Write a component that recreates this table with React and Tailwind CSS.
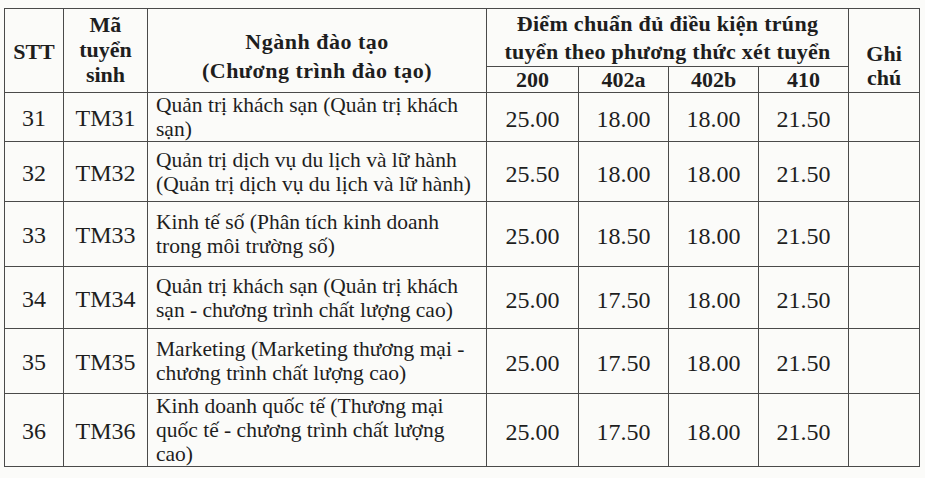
import React from 'react';

const rows = [
  { stt: '31', code: 'TM31', name: ['Quản trị khách sạn (Quản trị khách', 'sạn)'], scores: ['25.00', '18.00', '18.00', '21.50'], h: 'h-[49px]' },
  { stt: '32', code: 'TM32', name: ['Quản trị dịch vụ du lịch và lữ hành', '(Quản trị dịch vụ du lịch và lữ hành)'], scores: ['25.50', '18.00', '18.00', '21.50'], h: 'h-[60px]' },
  { stt: '33', code: 'TM33', name: ['Kinh tế số (Phân tích kinh doanh', 'trong môi trường số)'], scores: ['25.00', '18.50', '18.00', '21.50'], h: 'h-[65px]' },
  { stt: '34', code: 'TM34', name: ['Quản trị khách sạn (Quản trị khách', 'sạn - chương trình chất lượng cao)'], scores: ['25.00', '17.50', '18.00', '21.50'], h: 'h-[62px]' },
  { stt: '35', code: 'TM35', name: ['Marketing (Marketing thương mại -', 'chương trình chất lượng cao)'], scores: ['25.00', '17.50', '18.00', '21.50'], h: 'h-[65px]' },
  { stt: '36', code: 'TM36', name: ['Kinh doanh quốc tế (Thương mại', 'quốc tế - chương trình chất lượng', 'cao)'], scores: ['25.00', '17.50', '18.00', '21.50'], h: 'h-[73px]' },
];

const cell = 'border border-[#4a4a4a]';

export default function App() {
  return (
    <div className="w-[925px] h-[478px] bg-[#fbfbf9] pt-[8px] pl-[4px] font-['Liberation_Serif',serif] text-[#1e1e1e] overflow-hidden">
      <table className="table-fixed border-collapse w-[915px]">
        <colgroup>
          <col className="w-[59px]" />
          <col className="w-[84px]" />
          <col className="w-[339px]" />
          <col className="w-[92px]" />
          <col className="w-[90px]" />
          <col className="w-[90px]" />
          <col className="w-[90px]" />
          <col className="w-[71px]" />
        </colgroup>
        <thead className="font-bold text-[22px]">
          <tr className="h-[57px]">
            <th rowSpan={2} className={`${cell} align-middle leading-[25px] pt-[2px]`}>STT</th>
            <th rowSpan={2} className={`${cell} align-middle leading-[25px] pb-[2px]`}>
              Mã<br />tuyển<br />sinh
            </th>
            <th rowSpan={2} className={`${cell} align-middle leading-[29px] pt-[10px] tracking-[0.5px]`}>
              Ngành đào tạo<br />(Chương trình đào tạo)
            </th>
            <th colSpan={4} className={`${cell} align-middle leading-[28px] pt-[1px] tracking-[0.3px]`}>
              Điểm chuẩn đủ điều kiện trúng<br />tuyển theo phương thức xét tuyển
            </th>
            <th rowSpan={2} className={`${cell} align-top leading-[24px] pt-[33px]`}>
              Ghi<br />chú
            </th>
          </tr>
          <tr className="h-[26px] leading-[24px]">
            <th className={cell}>200</th>
            <th className={cell}>402a</th>
            <th className={cell}>402b</th>
            <th className={cell}>410</th>
          </tr>
        </thead>
        <tbody>
          {rows.map((r) => (
            <tr key={r.stt} className={r.h}>
              <td className={`${cell} text-center text-[24px] pt-[2px]`}>{r.stt}</td>
              <td className={`${cell} text-center text-[24px] pt-[2px]`}>{r.code}</td>
              <td className={`${cell} pl-[8px] text-[21.5px] leading-[24px] whitespace-nowrap`}>
                {r.name.map((line, i) => (
                  <div key={i}>{line}</div>
                ))}
              </td>
              {r.scores.map((s, i) => (
                <td key={i} className={`${cell} text-center text-[24px] pt-[4px]`}>{s}</td>
              ))}
              <td className={cell}></td>
            </tr>
          ))}
        </tbody>
      </table>
    </div>
  );
}
